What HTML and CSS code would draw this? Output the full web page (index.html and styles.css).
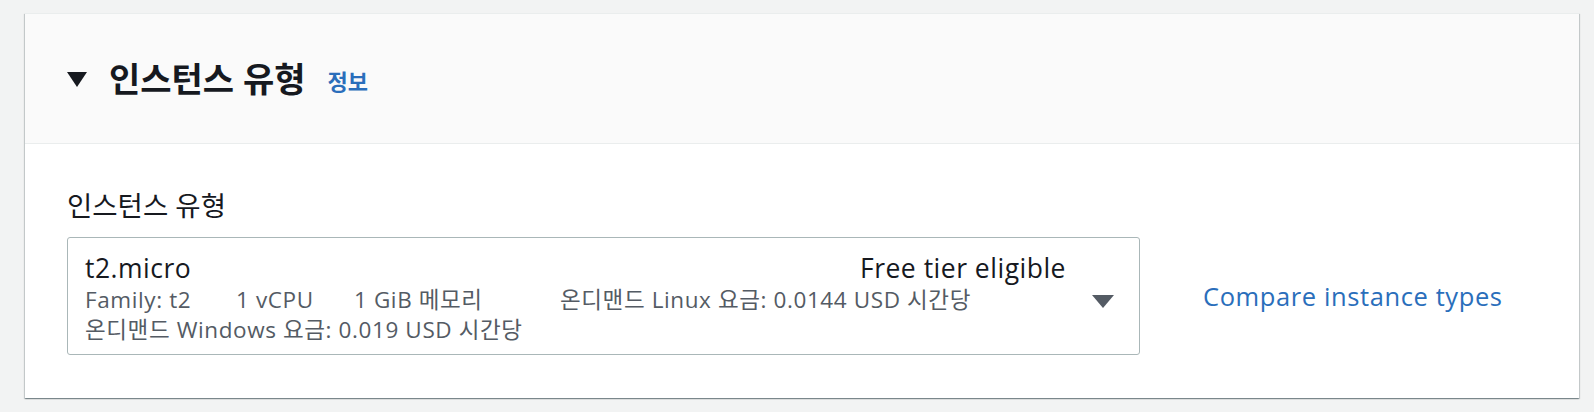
FILE: index.html
```html
<!DOCTYPE html>
<html lang="ko">
<head>
<meta charset="utf-8">
<title>인스턴스 유형</title>
<link rel="stylesheet" href="styles.css">
</head>
<body>
<section class="card">
  <header class="card-header">
    <svg class="caret" width="20" height="15" viewBox="0 0 20 15"><polygon points="0,0 20,0 10,15" fill="#16191f"/></svg>
    <h2 class="title">인스턴스 유형</h2>
    <a class="info" href="#">정보</a>
  </header>
  <div class="card-body">
    <div class="label">인스턴스 유형</div>
    <div class="field-row">
      <div class="select">
        <div class="select-content">
          <div class="main-line">
            <span class="name">t2.micro</span>
            <span class="tag">Free tier eligible</span>
          </div>
          <div class="meta">
            <span>Family: t2</span>
            <span>1 vCPU</span>
            <span>1 GiB 메모리</span>
            <span>온디맨드 Linux 요금: 0.0144 USD 시간당</span>
          </div>
          <div class="meta-line">온디맨드 Windows 요금: 0.019 USD 시간당</div>
        </div>
        <svg class="arrow" width="22" height="13" viewBox="0 0 22 13"><polygon points="0,0 22,0 11,13" fill="#545b64"/></svg>
      </div>
      <a class="compare" href="#">Compare instance types</a>
    </div>
  </div>
</section>
</body>
</html>
```

FILE: styles.css
```css
html, body {
  margin: 0;
  padding: 0;
}
body {
  background: #f2f3f3;
  font-family: "Open Sans", "Noto Sans CJK KR", sans-serif;
  color: #16191f;
  padding: 13px 15px 14px 25px;
}
.card {
  background: #ffffff;
  border-top: 1px solid #eaeded;
  box-shadow: 0 1px 1px 0 rgba(0, 28, 36, 0.3), 1px 1px 1px 0 rgba(0, 28, 36, 0.15), -1px 1px 1px 0 rgba(0, 28, 36, 0.15);
}
.card-header {
  background: #fafafa;
  height: 129px;
  border-bottom: 1px solid #eaeded;
  display: flex;
  align-items: center;
  padding-left: 42px;
}
.caret {
  display: block;
  margin-right: 22px;
  margin-top: 1px;
}
.title {
  margin: 0;
  font-size: 34px;
  font-weight: 700;
  line-height: 44px;
  color: #16191f;
}
.info {
  margin-left: 22px;
  font-size: 22px;
  font-weight: 700;
  color: #2a6ebb;
  text-decoration: none;
  line-height: 28px;
  margin-top: 4px;
}
.card-body {
  padding: 45px 42px 43px 42px;
}
.label {
  font-size: 27.5px;
  line-height: 34px;
  margin-bottom: 14px;
  color: #16191f;
}
.field-row {
  display: flex;
  align-items: center;
}
.select {
  width: 1073px;
  box-sizing: border-box;
  height: 118px;
  border: 1px solid #aab7b8;
  border-radius: 3px;
  display: flex;
  align-items: center;
  padding: 13px 25px 9px 17px;
}
.select-content {
  flex: 1;
  align-self: stretch;
}
.main-line {
  display: flex;
  justify-content: space-between;
  font-size: 26.5px;
  letter-spacing: 0.5px;
  line-height: 34px;
  color: #16191f;
}
.meta {
  display: grid;
  grid-template-columns: 151px 118px 206px auto;
  font-size: 22.5px;
  letter-spacing: 0.6px;
  line-height: 30px;
  color: #545b64;
}
.meta-line {
  font-size: 22.5px;
  letter-spacing: 0.6px;
  line-height: 30px;
  color: #545b64;
}
.arrow {
  display: block;
  margin-left: 26px;
  margin-top: 6px;
}
.compare {
  margin-left: 63px;
  font-size: 25.5px;
  letter-spacing: 0.6px;
  color: #2a6ebb;
  text-decoration: none;
  line-height: 34px;
}
```
